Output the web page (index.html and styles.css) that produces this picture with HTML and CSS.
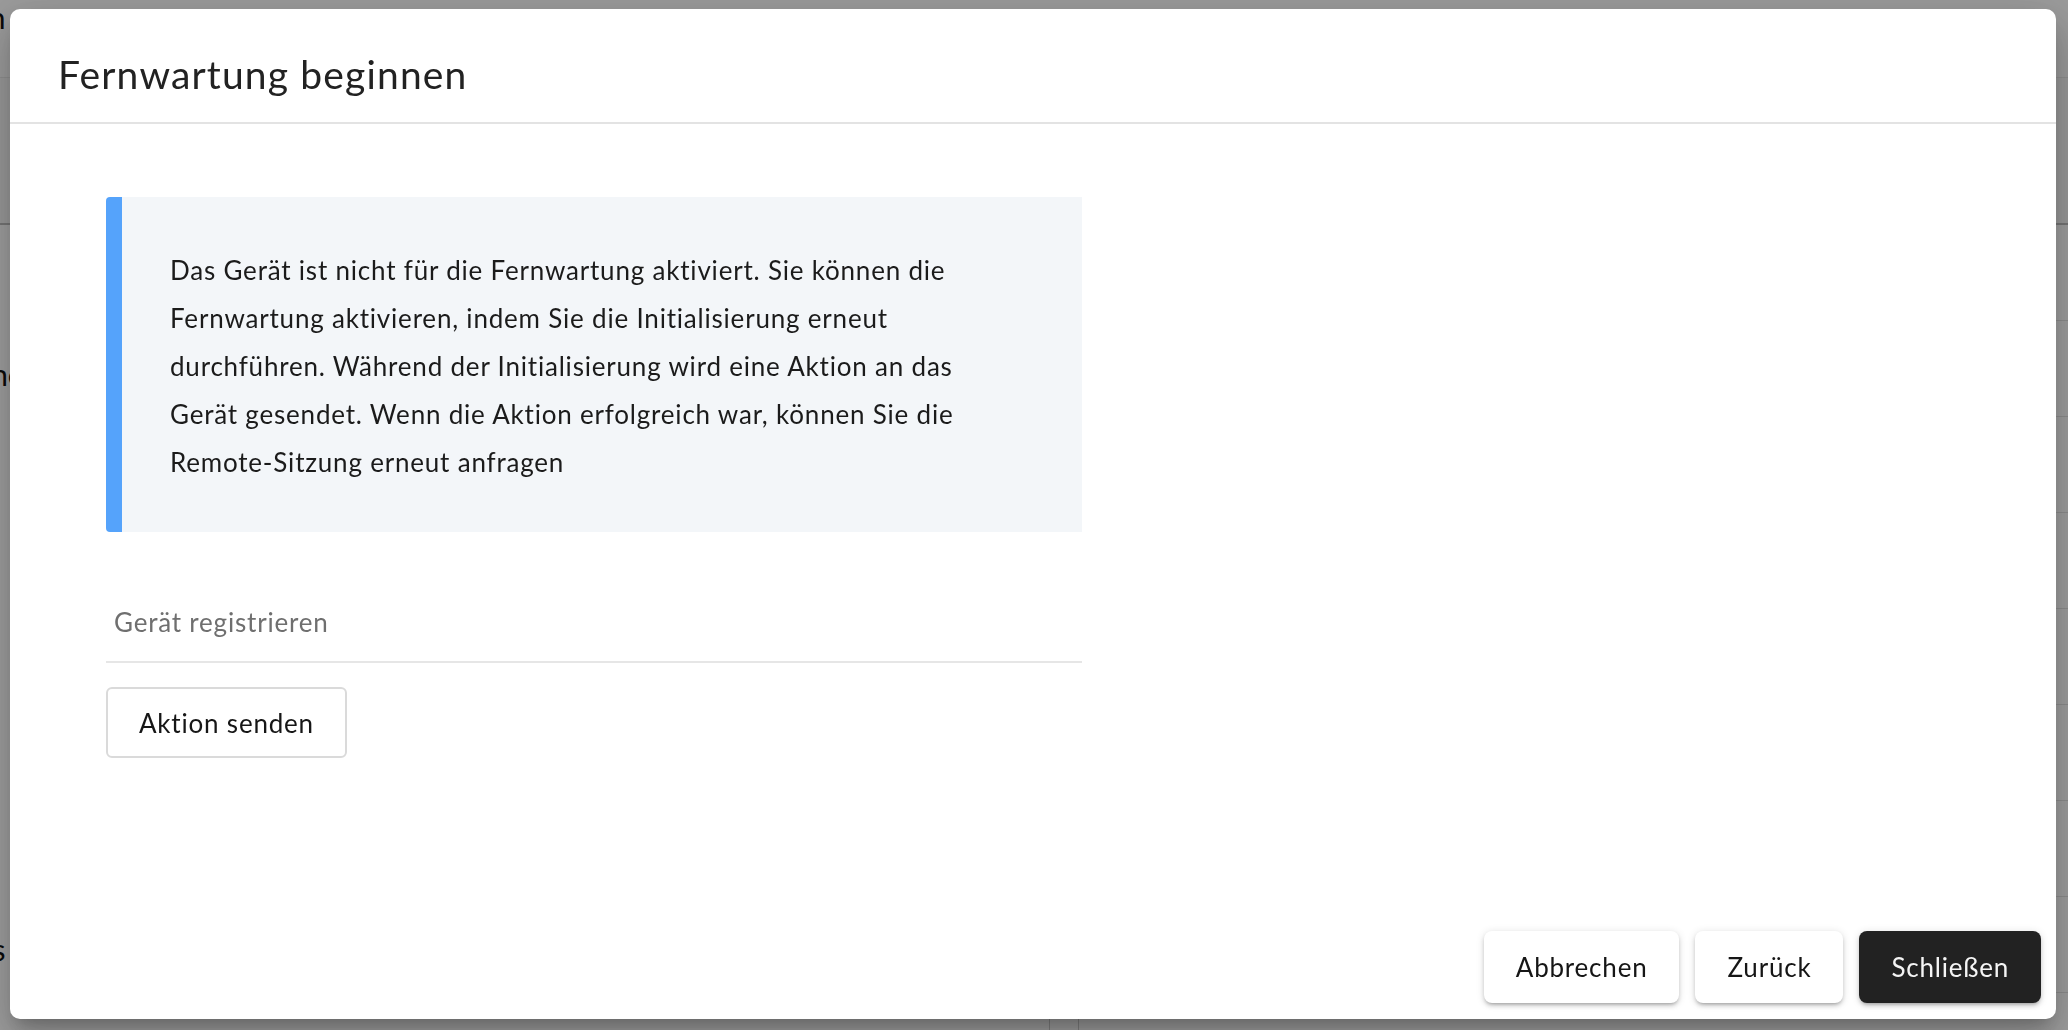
FILE: index.html
```html
<!DOCTYPE html>
<html lang="de">
<head>
<meta charset="utf-8">
<title>Fernwartung beginnen</title>
<link rel="stylesheet" href="styles.css">
</head>
<body>
<div class="page">
  <div class="page-top"><span class="page-title">Wartungsplan</span></div>
  <div class="page-sub"></div>
  <div class="page-main">
    <div class="page-left">
      <div class="page-label">Gerätename</div>
      <div class="page-label page-label-low">Status</div>
    </div>
    <div class="page-divider"></div>
    <div class="page-right">
      <div class="page-row"></div>
      <div class="page-row"></div>
      <div class="page-row"></div>
      <div class="page-row"></div>
      <div class="page-row"></div>
      <div class="page-row"></div>
      <div class="page-row"></div>
      <div class="page-row"></div>
    </div>
  </div>
</div>
<div class="backdrop"></div>
<div class="dialog" role="dialog" aria-labelledby="dlg-title">
  <header class="dialog-header">
    <h2 id="dlg-title" class="dialog-title">Fernwartung beginnen</h2>
  </header>
  <main class="dialog-body">
    <div class="alert">
      <p class="alert-text">Das Gerät ist nicht für die Fernwartung aktiviert. Sie können die Fernwartung aktivieren, indem Sie die Initialisierung erneut durchführen. Während der Initialisierung wird eine Aktion an das Gerät gesendet. Wenn die Aktion erfolgreich war, können Sie die Remote-Sitzung erneut anfragen</p>
    </div>
    <div class="field">
      <input class="field-input" type="text" placeholder="Gerät registrieren">
    </div>
    <button class="btn btn-outline" type="button">Aktion senden</button>
  </main>
  <footer class="dialog-footer">
    <button class="btn btn-raised" type="button">Abbrechen</button>
    <button class="btn btn-raised" type="button">Zurück</button>
    <button class="btn btn-dark" type="button">Schließen</button>
  </footer>
</div>
</body>
</html>
```
FILE: styles.css
```css
* { box-sizing: border-box; }

html, body {
  margin: 0;
  padding: 0;
  width: 2068px;
  height: 1030px;
  overflow: hidden;
}

body {
  font-family: Lato, "Noto Sans", "Liberation Sans", sans-serif;
  font-variant-ligatures: none;
  background: #ffffff;
  color: #1e1e1e;
}

/* underlying page (behind overlay) */
.page {
  width: 2068px;
  height: 1030px;
  display: flex;
  flex-direction: column;
  background: #ffffff;
}
.page-top {
  height: 78px;
  border-bottom: 1px solid #e6e6e6;
  background: #fafafa;
  overflow: hidden;
}
.page-title {
  display: block;
  font-size: 30px;
  line-height: 30px;
  margin-left: -178px;
  padding-top: 2px;
  color: #111;
}
.page-sub {
  height: 147px;
  border-bottom: 2px solid #bdbdbd;
  background: #f6f6f6;
}
.page-main {
  flex: 1;
  display: flex;
}
.page-left {
  width: 1049px;
  display: flex;
  flex-direction: column;
  padding-top: 134px;
}
.page-label {
  font-size: 30px;
  line-height: 30px;
  margin-left: -138px;
  color: #111;
}
.page-label-low {
  margin-top: 545px;
  margin-left: -76px;
}
.page-divider {
  width: 30px;
  border-left: 1px solid #cfcfcf;
  border-right: 1px solid #cfcfcf;
}
.page-right {
  flex: 1;
  display: flex;
  flex-direction: column;
}
.page-row {
  height: 96px;
  border-bottom: 1px solid #e2e2e2;
}

.backdrop {
  position: fixed;
  inset: 0;
  background: rgba(0, 0, 0, 0.38);
}

/* dialog */
.dialog {
  position: fixed;
  left: 10px;
  top: 9px;
  width: 2046px;
  height: 1010px;
  background: #ffffff;
  border-radius: 10px;
  display: flex;
  flex-direction: column;
  box-shadow:
    0 11px 15px -7px rgba(0, 0, 0, 0.2),
    0 24px 38px 3px rgba(0, 0, 0, 0.14),
    0 9px 46px 8px rgba(0, 0, 0, 0.12);
}

.dialog-header {
  height: 115px;
  padding: 42px 48px 0 48px;
  border-bottom: 2px solid #e3e3e3;
}
.dialog-title {
  margin: 0;
  font-size: 39px;
  font-weight: 400;
  line-height: 47px;
  color: #222222;
  letter-spacing: 1.15px;
}

.dialog-body {
  flex: 1;
  padding: 73px 96px 0 96px;
  display: flex;
  flex-direction: column;
  align-items: flex-start;
}

.alert {
  width: 976px;
  background: #f3f6f9;
  border-left: 16px solid #55a3fb;
  border-radius: 4px 0 0 4px;
  padding: 49px 64px 46px 48px;
}
.alert-text {
  margin: 0;
  font-size: 26px;
  line-height: 48px;
  letter-spacing: 0.8px;
  color: #1b1b1b;
}

.field {
  width: 976px;
  margin-top: 66px;
}
.field-input {
  display: block;
  width: 100%;
  height: 65px;
  padding: 0 8px 15px 8px;
  border: none;
  border-bottom: 2px solid #e6e6e6;
  font-family: inherit;
  font-size: 26px;
  line-height: 48px;
  letter-spacing: 0.8px;
  color: #1b1b1b;
  background: transparent;
  outline: none;
}
.field-input::placeholder {
  color: #6f6f6f;
  opacity: 1;
}

.btn {
  font-family: inherit;
  font-size: 26px;
  letter-spacing: 0.8px;
  height: 72px;
  padding: 0 32px;
  border-radius: 8px;
  cursor: pointer;
  color: #161616;
  background: #ffffff;
}
.btn-outline {
  margin-top: 24px;
  height: 71px;
  border: 2px solid #dadada;
  border-radius: 6px;
  padding: 0 31px;
}

.dialog-footer {
  display: flex;
  justify-content: flex-end;
  gap: 16px;
  padding: 0 15px 16px 0;
}
.btn-raised {
  border: none;
  box-shadow:
    0 3px 3px -2px rgba(0, 0, 0, 0.2),
    0 3px 4px 0 rgba(0, 0, 0, 0.14),
    0 1px 8px 0 rgba(0, 0, 0, 0.12);
}
.btn-dark {
  border: none;
  background: #222222;
  color: #f5f5f5;
  box-shadow:
    0 3px 3px -2px rgba(0, 0, 0, 0.2),
    0 3px 4px 0 rgba(0, 0, 0, 0.14),
    0 1px 8px 0 rgba(0, 0, 0, 0.12);
}
```
